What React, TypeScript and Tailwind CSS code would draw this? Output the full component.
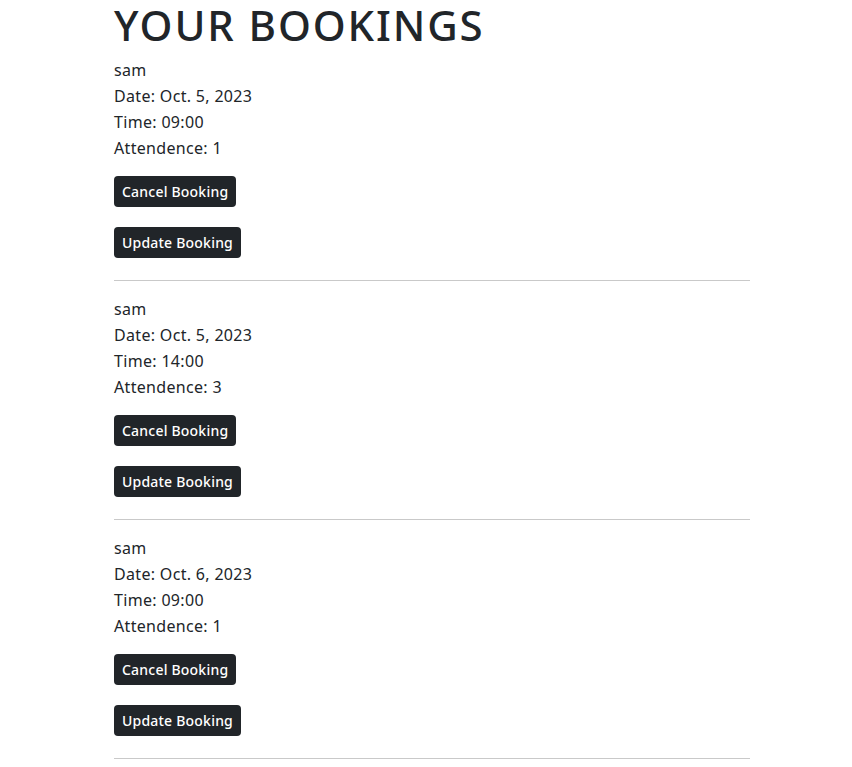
const bookings = [
  { name: "sam", date: "Oct. 5, 2023", time: "09:00", attendance: 1 },
  { name: "sam", date: "Oct. 5, 2023", time: "14:00", attendance: 3 },
  { name: "sam", date: "Oct. 6, 2023", time: "09:00", attendance: 1 },
];

export default function App() {
  return (
    <div className="min-h-screen bg-white text-[#212529] font-['Noto_Sans',sans-serif]">
      <div className="w-[636px] ml-[114px]">
        <h1 className="text-[42px] leading-[50px] font-medium tracking-[0.045em]">YOUR BOOKINGS</h1>
        {bookings.map((b, i) => (
          <div key={i}>
            <div className="text-[16px] leading-[26px] pt-[7px] tracking-[0.02em]">
              <p>{b.name}</p>
              <p>Date: {b.date}</p>
              <p>Time: {b.time}</p>
              <p>Attendence: {b.attendance}</p>
            </div>
            <div className="mt-[15px] flex flex-col items-start gap-[20px]">
              <button className="h-[31px] px-[8px] rounded-[4px] bg-[#212529] text-white text-[14px] font-medium tracking-[0.015em]">
                Cancel Booking
              </button>
              <button className="h-[31px] px-[8px] rounded-[4px] bg-[#212529] text-white text-[14px] font-medium tracking-[0.015em]">
                Update Booking
              </button>
            </div>
            <hr className="mt-[22px] mb-[8px] border-t border-[#c9c9c9]" />
          </div>
        ))}
      </div>
    </div>
  );
}
